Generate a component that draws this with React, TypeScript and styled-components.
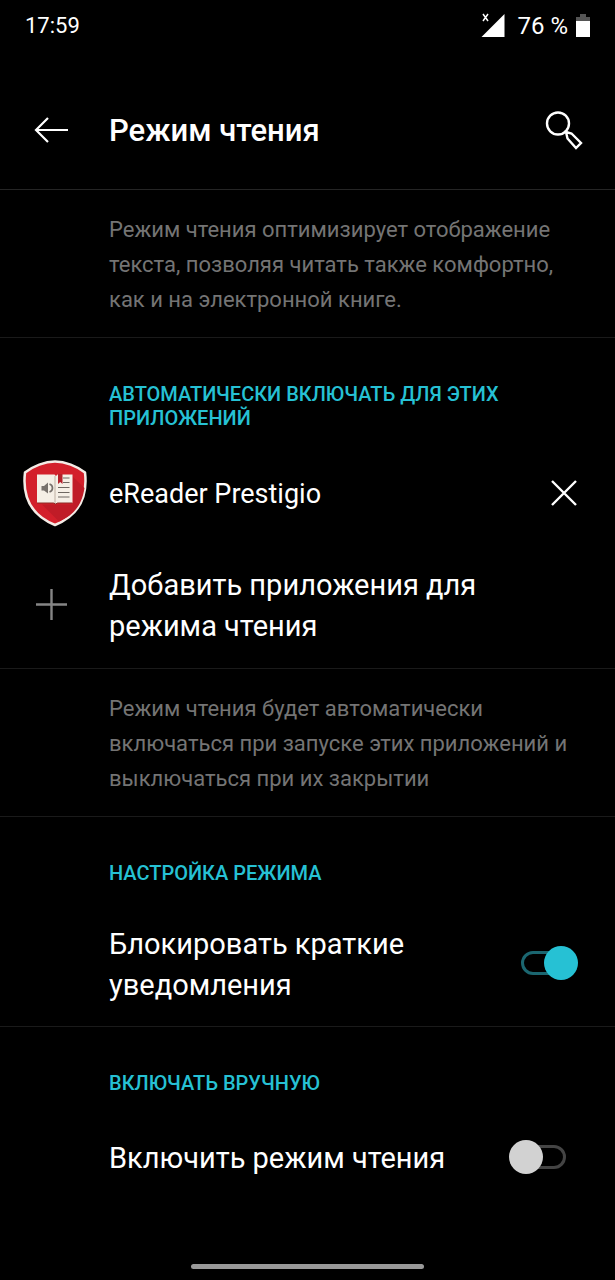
import React, { useState } from "react";
import styled, { createGlobalStyle } from "styled-components";

const accent = "#26c1d4";

const GlobalStyle = createGlobalStyle`
  *, *::before, *::after { box-sizing: border-box; }
  body {
    margin: 0;
    background: #000;
    color: #fff;
    font-family: Roboto, "Noto Sans", sans-serif;
  }
`;

const Screen = styled.div`
  min-height: 100vh;
  display: flex;
  flex-direction: column;
`;

const StatusBar = styled.div`
  display: flex;
  align-items: center;
  justify-content: space-between;
  height: 52px;
  padding: 0 25px;
  line-height: 28px;
`;

const Clock = styled.span`
  font-size: 22px;
`;

const StatusIcons = styled.div`
  display: flex;
  align-items: center;
  gap: 8px;
  font-size: 24px;
`;

const Signal = styled.svg`
  margin-right: 4px;
`;

const Header = styled.header`
  display: flex;
  align-items: center;
  height: 138px;
  padding: 20px 31px 0 32px;
  border-bottom: 1px solid #252525;
`;

const IconButton = styled.button`
  display: flex;
  align-items: center;
  justify-content: center;
  flex: none;
  width: 40px;
  height: 40px;
  padding: 0;
  border: 0;
  background: none;
  color: #fff;
`;

const Title = styled.h1`
  flex: 1;
  margin: 0 0 0 37px;
  font-size: 31px;
  line-height: 36px;
  font-weight: 500;
`;

const Description = styled.p`
  margin: 0;
  padding: 22px 32px 20px 109px;
  border-bottom: 1px solid #1a1a1a;
  color: #747474;
  font-size: 22px;
  line-height: 35px;
`;

const Section = styled.section<{ $divided?: boolean }>`
  padding-top: 44px;
  border-bottom: ${(p) => (p.$divided ? "1px solid #1a1a1a" : "0")};
`;

const SectionTitle = styled.h2`
  margin: 0;
  padding: 0 32px 8px 109px;
  color: ${accent};
  font-size: 20px;
  line-height: 24px;
  font-weight: 500;
  text-transform: uppercase;
`;

const AppRow = styled.div`
  display: flex;
  align-items: center;
  height: 112px;
  padding: 0 31px 0 22px;
`;

const AppName = styled.span`
  flex: 1;
  margin-left: 21px;
  font-size: 27px;
  line-height: 40px;
`;

const AddRow = styled.button`
  display: flex;
  align-items: center;
  width: 100%;
  padding: 15px 32px 21px;
  border: 0;
  background: none;
  color: #fff;
  font-family: inherit;
  font-size: 29px;
  line-height: 41px;
  text-align: left;
`;

const AddIcon = styled.svg`
  flex: none;
  margin-right: 37px;
`;

const SettingRow = styled.label<{ $roomy?: boolean }>`
  display: flex;
  align-items: center;
  justify-content: space-between;
  gap: 48px;
  padding: ${(p) => (p.$roomy ? 35 : 31)}px 36px 20px 109px;
  font-size: 29px;
  line-height: 41px;
`;

const Switch = styled.input`
  appearance: none;
  display: flex;
  align-items: center;
  justify-content: flex-start;
  flex: none;
  position: relative;
  width: 70px;
  height: 34px;
  margin: 0 0 4px;

  &::before {
    content: "";
    width: 45px;
    height: 24px;
    margin-left: 12px;
    border: 3px solid #444;
    border-radius: 12px;
  }

  &::after {
    content: "";
    position: absolute;
    top: 0;
    left: 0;
    width: 34px;
    height: 34px;
    border-radius: 50%;
    background: #d2d2d2;
  }

  &:checked::before { border-color: #1b6670; }
  &:checked::after { left: auto; right: 1px; background: ${accent}; }
`;

const HomeBar = styled.div`
  width: 38%;
  height: 5px;
  margin: auto auto 11px;
  border-radius: 3px;
  background: #999;
`;

const ShieldLogo = () => (
  <svg width="66" height="68" viewBox="0 0 66 68" aria-hidden="true">
    <path
      d="M33 1.500C43 1.500 55 6 63 12.500C65.500 34 60 54 33 65C6 54 .500 34 3 12.500C11 6 23 1.500 33 1.500Z"
      fill="#d3202b"
      stroke="#f4ece6"
      strokeWidth="2.500"
      strokeLinejoin="round"
    />
    <path d="M51 17L62.500 28C60 45 52 55 37 61.500L20 44.500L51 44.500Z" fill="#c01c27" />
    <path d="M15 14.500H32.500L34 16L35.500 14.500H50.500V43H35.500L33.500 44L31.500 43H15Z" fill="#f5efe6" />
    <path d="M15 43H31.500L33.500 44L35.500 43H50.500" fill="none" stroke="#8b2a26" strokeWidth="1" />
    <path d="M33 16V43" stroke="#cfc5b8" strokeWidth="1.500" />
    <path d="M19.500 26H22L26 22.500V33.500L22 30.500H19.500Z" fill="#77716c" />
    <path d="M27.500 24C31.500 25.500 31.500 30.500 27.500 32" fill="none" stroke="#77716c" strokeWidth="1.700" />
    <path d="M41 18H47.500M41 22.500H47.500M36 27.500H47.500M36 32.500H47.500M36 37H47.500" stroke="#6e6862" strokeWidth="1.200" />
    <path d="M36 14H40.500V24L38.200 22L36 24Z" fill="#b5202a" />
  </svg>
);

export default function App() {
  const [blockPopups, setBlockPopups] = useState(true);
  const [readingMode, setReadingMode] = useState(false);

  return (
    <Screen>
      <GlobalStyle />
      <StatusBar>
        <Clock>17:59</Clock>
        <StatusIcons>
          <Signal width="24" height="26" viewBox="0 0 24 26" aria-hidden="true">
            <path d="M23.500 1V24H.500Z" fill="#fff" />
            <path d="M2 1L7 8M7 1L2 8" stroke="#fff" strokeWidth="1.500" />
          </Signal>
          <span>76 %</span>
          <svg width="14" height="24" viewBox="0 0 14 24" aria-hidden="true">
            <path d="M4 0H10V3H14V8H0V3H4Z" fill="#555" />
            <path d="M0 7H14V23H0Z" fill="#fff" />
          </svg>
        </StatusIcons>
      </StatusBar>

      <Header>
        <IconButton type="button" aria-label="Назад">
          <svg width="40" height="40" viewBox="0 0 40 40" fill="none" stroke="currentColor" strokeWidth="2.200">
            <path d="M36 19H4M16 7L4 19L16 31" />
          </svg>
        </IconButton>
        <Title>Режим чтения</Title>
        <IconButton type="button" aria-label="Поиск">
          <svg width="40" height="40" viewBox="0 0 40 40" fill="none" stroke="currentColor" strokeWidth="2.400">
            <circle cx="14" cy="12.500" r="11" />
            <path d="M22 21L27.500 22.500L37 32L32 37L23.500 27.500Z" />
          </svg>
        </IconButton>
      </Header>

      <Description>
        Режим чтения оптимизирует отображение текста, позволяя читать также комфортно, как и на электронной книге.
      </Description>

      <Section $divided>
        <SectionTitle>Автоматически включать для этих приложений</SectionTitle>
        <AppRow>
          <ShieldLogo />
          <AppName>eReader Prestigio</AppName>
          <IconButton type="button" aria-label="Удалить">
            <svg width="40" height="40" viewBox="0 0 40 40" fill="none" stroke="currentColor" strokeWidth="2.400">
              <path d="M8 7L32 31M32 7L8 31" />
            </svg>
          </IconButton>
        </AppRow>
        <AddRow type="button">
          <AddIcon width="40" height="40" viewBox="0 0 40 40" fill="none" stroke="#858585" strokeWidth="2.400" aria-hidden="true">
            <path d="M4 18.500H35M19.500 3V34" />
          </AddIcon>
          <span>Добавить приложения для режима чтения</span>
        </AddRow>
      </Section>

      <Description>
        Режим чтения будет автоматически включаться при запуске этих приложений и выключаться при их закрытии
      </Description>

      <Section $divided>
        <SectionTitle>Настройка режима</SectionTitle>
        <SettingRow>
          <span>Блокировать краткие уведомления</span>
          <Switch type="checkbox" checked={blockPopups} onChange={(e) => setBlockPopups(e.target.checked)} />
        </SettingRow>
      </Section>

      <Section>
        <SectionTitle>Включать вручную</SectionTitle>
        <SettingRow $roomy>
          <span>Включить режим чтения</span>
          <Switch type="checkbox" checked={readingMode} onChange={(e) => setReadingMode(e.target.checked)} />
        </SettingRow>
      </Section>

      <HomeBar />
    </Screen>
  );
}
